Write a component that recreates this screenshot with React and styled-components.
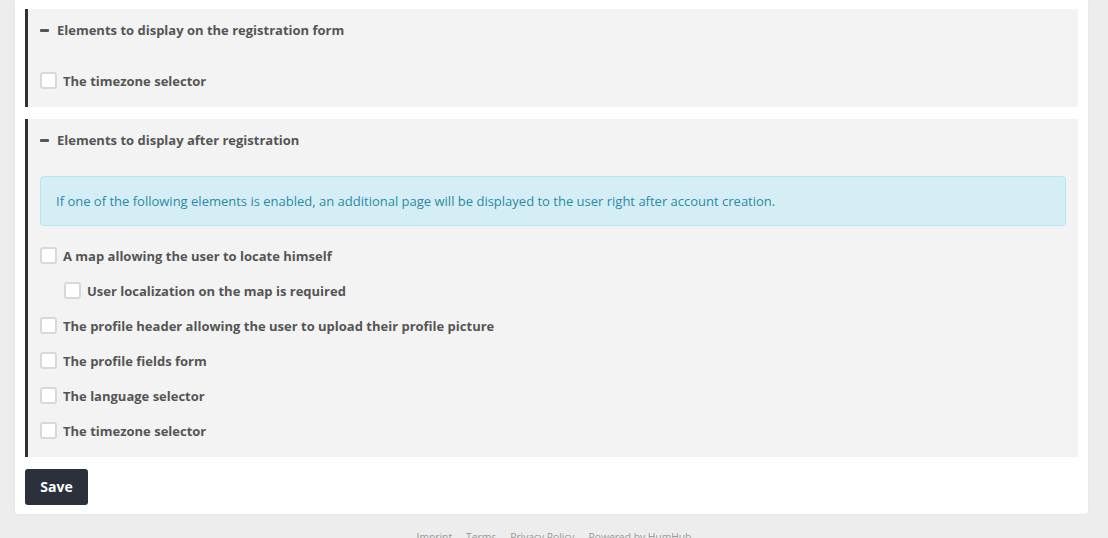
import React from "react";
import styled, { createGlobalStyle } from "styled-components";

const GlobalStyle = createGlobalStyle`
  body {
    margin: 0;
    background: #ededed;
    font-family: "Open Sans", "Liberation Sans", sans-serif;
    color: #555555;
  }
`;

const Page = styled.div`
  width: 1108px;
  height: 538px;
  overflow: hidden;
`;

const Card = styled.div`
  margin: 0 20px 0 15px;
  background: #ffffff;
  border-radius: 0 0 4px 4px;
  padding: 9px 10px 9px 10px;
  box-shadow: 0 0 3px rgba(0, 0, 0, 0.06);
`;

const Panel = styled.div`
  background: #f3f3f3;
  border-left: 3px solid #2b303b;
  padding: 0 12px 9px 12px;
  margin-bottom: 12px;
`;

const Header = styled.div`
  height: 42px;
  display: flex;
  align-items: center;
  gap: 8px;
  font-size: 13px;
  font-weight: 700;
  color: #555555;
`;

const Minus = styled.span`
  width: 9px;
  height: 3px;
  background: #555555;
  border-radius: 1px;
`;

const Body = styled.div`
  padding-top: ${(p) => (p.$info ? 15 : 12)}px;
`;

const Info = styled.div`
  height: 50px;
  box-sizing: border-box;
  display: flex;
  align-items: center;
  padding: 0 15px;
  background: #d5eef5;
  border: 1px solid #b3e6f2;
  border-radius: 4px;
  color: #2a8aa6;
  font-size: 13px;
  margin-bottom: 12px;
`;

const Row = styled.label`
  height: 35px;
  display: flex;
  align-items: center;
  gap: 6px;
  padding-left: ${(p) => (p.$nested ? 24 : 0)}px;
  font-size: 13px;
  font-weight: 700;
  color: #555555;
`;

const Box = styled.span`
  width: 17px;
  height: 17px;
  box-sizing: border-box;
  background: #ffffff;
  border: 2px solid #d8d8d8;
  border-radius: 3px;
  flex: none;
`;

const SaveButton = styled.button`
  display: block;
  height: 36px;
  width: 63px;
  border: none;
  border-radius: 3px;
  background: #2b303b;
  color: #ffffff;
  font-family: "Open Sans", "Liberation Sans", sans-serif;
  font-size: 14px;
  font-weight: 700;
  padding: 0 0 2px 0;
`;

const Footer = styled.div`
  display: flex;
  justify-content: center;
  gap: 14px;
  padding: 16px 0 0 0;
  font-size: 10.3px;
  color: #999999;
`;

const Check = ({ children, nested }) => (
  <Row $nested={nested}>
    <Box />
    {children}
  </Row>
);

export default function App() {
  return (
    <Page>
      <GlobalStyle />
      <Card>
        <Panel>
          <Header>
            <Minus />
            Elements to display on the registration form
          </Header>
          <Body>
            <Check>The timezone selector</Check>
          </Body>
        </Panel>
        <Panel>
          <Header>
            <Minus />
            Elements to display after registration
          </Header>
          <Body $info>
            <Info>
              If one of the following elements is enabled, an additional page will be displayed to the user right after account creation.
            </Info>
            <Check>A map allowing the user to locate himself</Check>
            <Check nested>User localization on the map is required</Check>
            <Check>The profile header allowing the user to upload their profile picture</Check>
            <Check>The profile fields form</Check>
            <Check>The language selector</Check>
            <Check>The timezone selector</Check>
          </Body>
        </Panel>
        <SaveButton>Save</SaveButton>
      </Card>
      <Footer>
        <span>Imprint</span>
        <span>Terms</span>
        <span>Privacy Policy</span>
        <span>Powered by HumHub</span>
      </Footer>
    </Page>
  );
}
